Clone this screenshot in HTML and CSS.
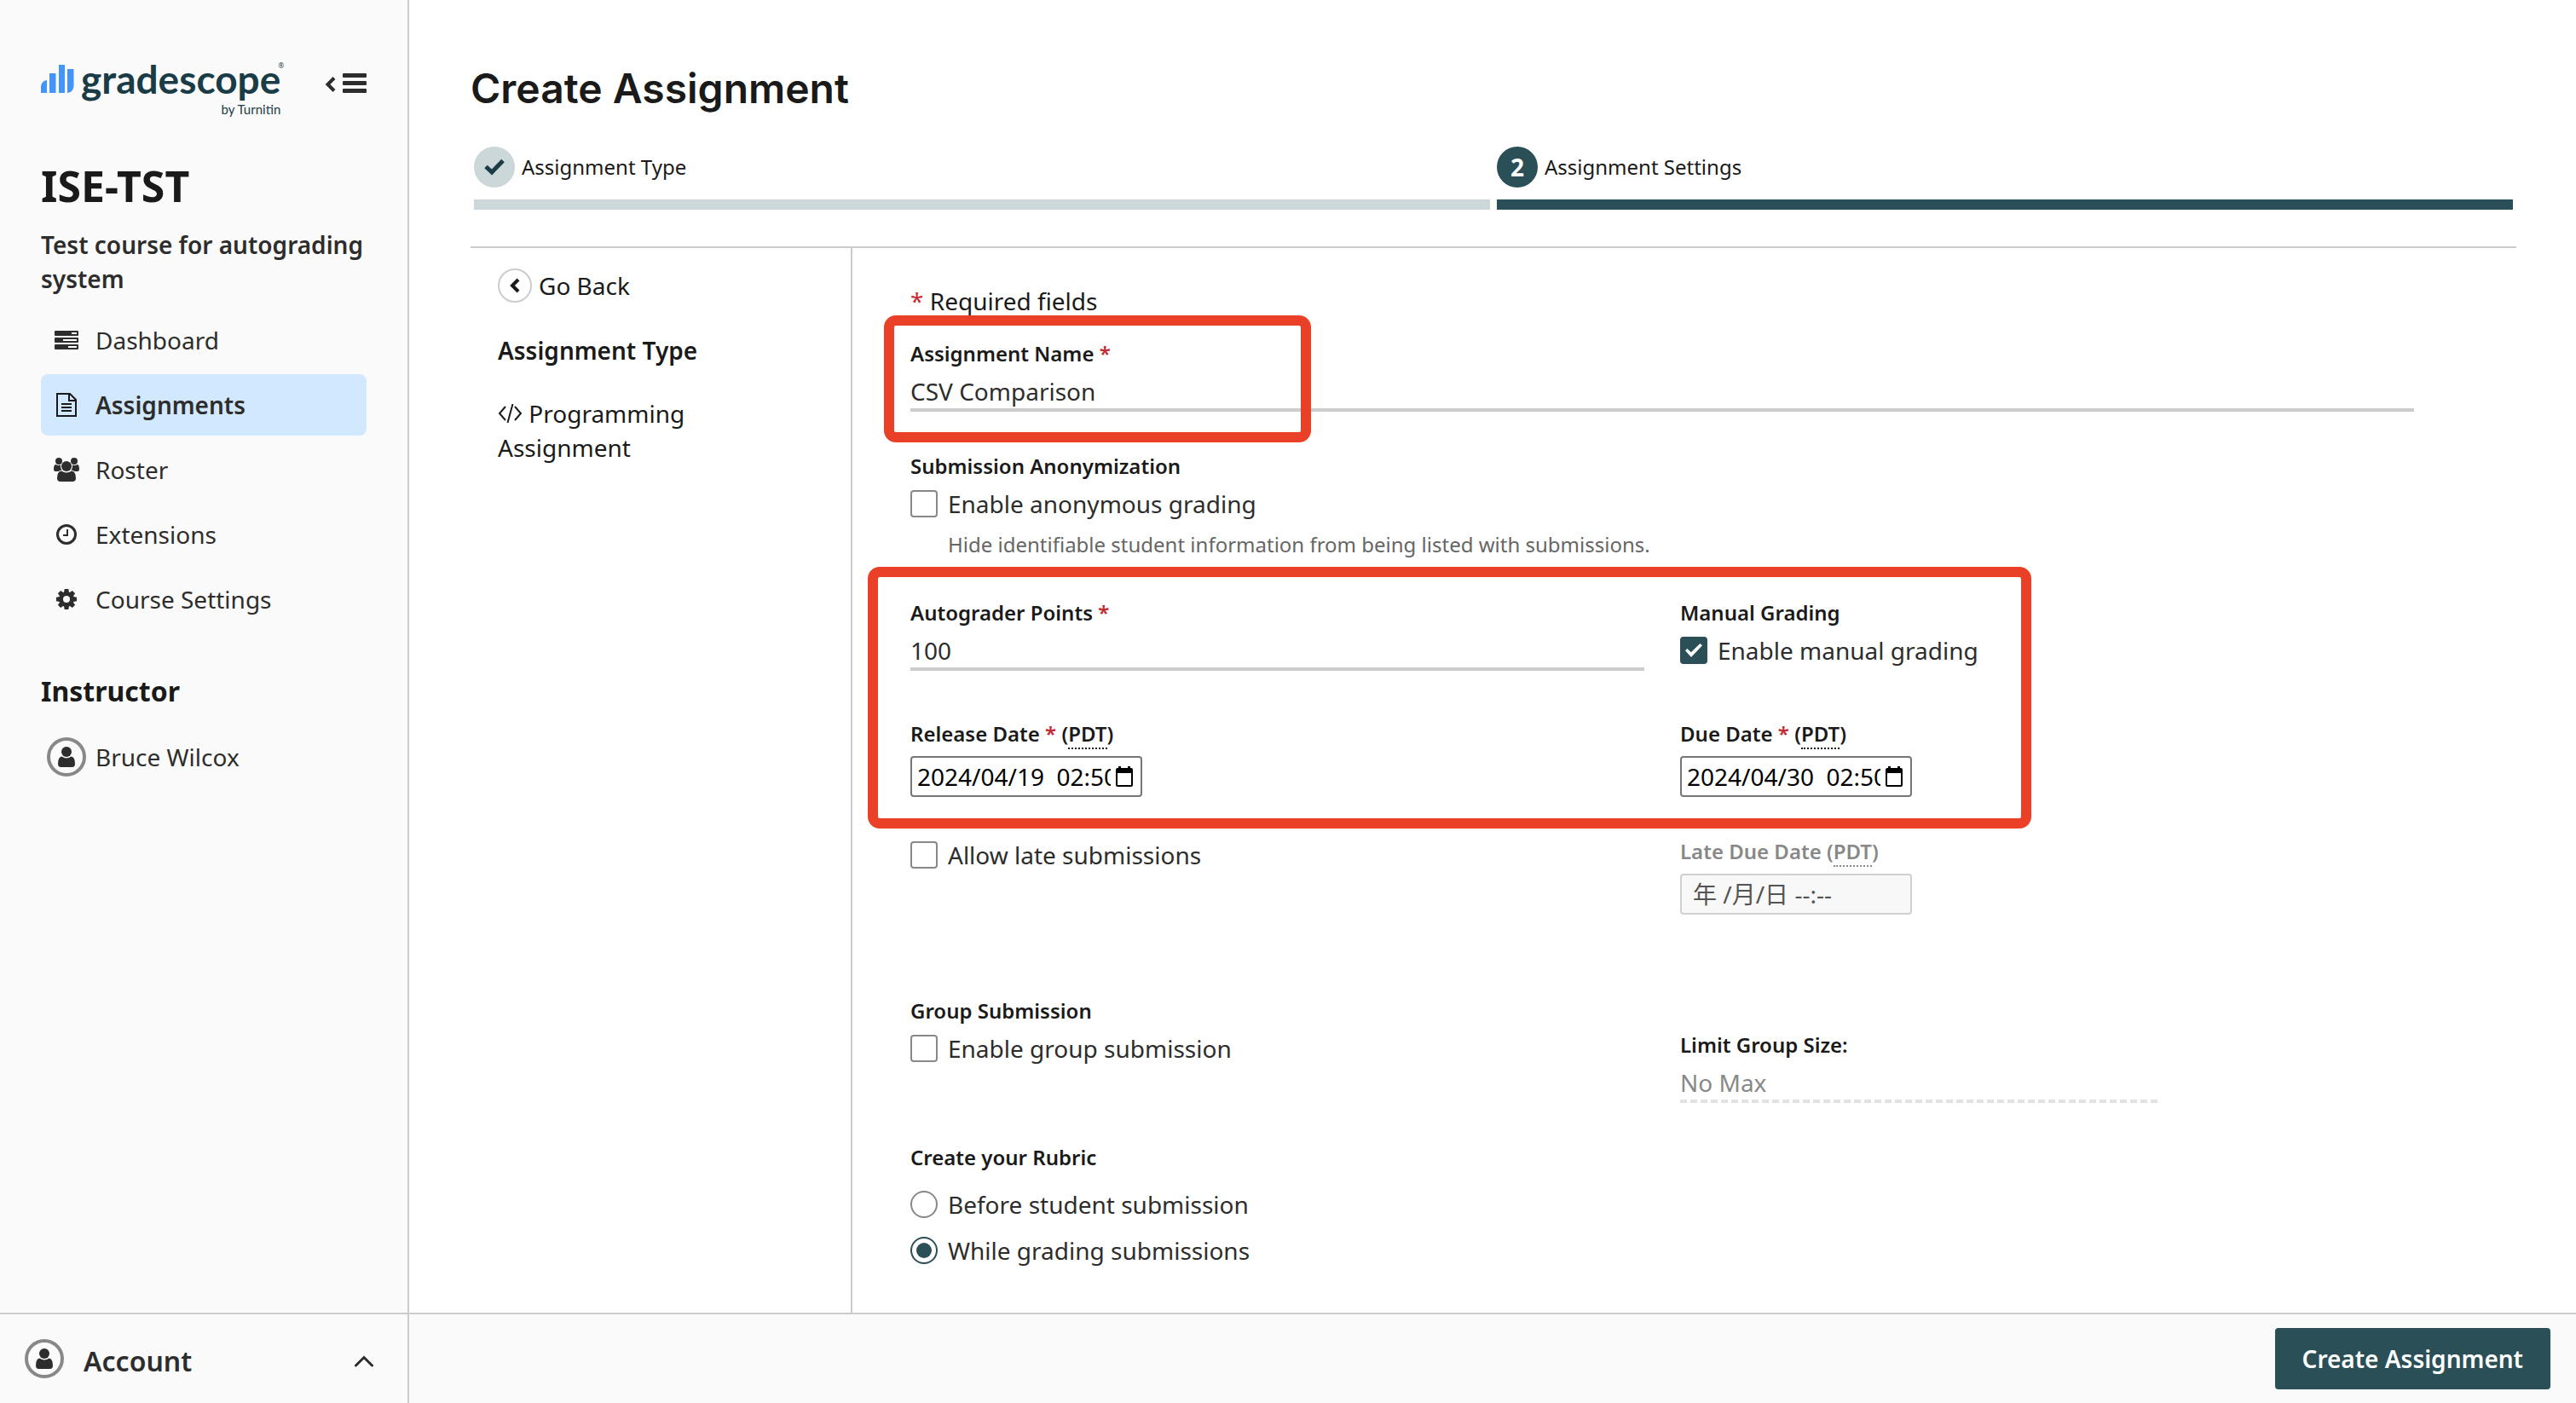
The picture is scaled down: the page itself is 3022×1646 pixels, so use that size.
FILE: index.html
```html
<!DOCTYPE html>
<html lang="en">
<head>
<meta charset="utf-8">
<title>Create Assignment | Gradescope</title>
<link rel="stylesheet" href="styles.css">
</head>
<body>
<div class="app">
  <aside class="sidebar">
    <div class="sidebar-top">
      <header class="brand-row">
        <a class="brand" href="#">
          <svg class="brand-bars" width="39" height="35" viewBox="0 0 39 35" aria-hidden="true">
            <g fill="#4394fb"><path d="M0 34V26Q1 20 7 19V34Z"/><path d="M10 11H17.500V34H10Z"/><path d="M21 1H28V34H21Z"/><path d="M31 6H38.500V26Q38 33 31 34Z"/></g>
          </svg>
          <span class="brand-text"><span class="brand-name">gradescope</span><span class="brand-by">by Turnitin</span></span>
          <sup class="brand-reg">®</sup>
        </a>
        <button class="icon-button" type="button" aria-label="Collapse sidebar">
          <svg width="49" height="24" viewBox="0 0 49 24"><path d="M11 5.500L3.500 13L11 20.500" fill="none" stroke="#2d2d2d" stroke-width="4"/><g fill="#2d2d2d"><rect x="21" width="28" height="5" rx="1"/><rect x="21" y="9" width="28" height="5" rx="1"/><rect x="21" y="18" width="28" height="5" rx="1"/></g></svg>
        </button>
      </header>
      <h1 class="course">ISE-TST</h1>
      <p class="course-name">Test course for autograding system</p>
      <nav class="nav">
        <a class="nav-item" href="#"><span class="nav-icon"><svg width="28" height="22" viewBox="0 0 28 22"><rect width="28" height="6" rx="1" fill="#2d2d2d"/><rect y="8" width="28" height="6" rx="1" fill="#2d2d2d"/><rect y="16" width="28" height="6" rx="1" fill="#2d2d2d"/><g fill="#fff"><rect x="20" y="2" width="6" height="2"/><rect x="10" y="10" width="16" height="2"/><rect x="16" y="18" width="10" height="2"/></g></svg></span>Dashboard</a>
        <a class="nav-item nav-item-active" href="#" aria-current="page"><span class="nav-icon"><svg width="24" height="28" viewBox="0 0 24 28" fill="none" stroke="#1a1a1a" stroke-width="2"><path d="M2 1H16L23 8V27H1V1ZM15 1V9H23M6 13H18M6 17H18M6 21H18"/></svg></span>Assignments</a>
        <a class="nav-item" href="#"><span class="nav-icon"><svg width="30" height="28" viewBox="0 0 30 28" fill="#2d2d2d"><circle cx="6" cy="4" r="4"/><circle cx="24" cy="4" r="4"/><path d="M2.500 8Q5 9.500 8 8.500Q7.500 12 9.500 14.500Q7 14.500 5.500 16H2Q0 16 0 13.500Q0 8 2.500 8ZM27.500 8Q25 9.500 22 8.500Q22.500 12 20.500 14.500Q23 14.500 24.500 16H28Q30 16 30 13.500Q30 8 27.500 8Z"/><circle cx="15" cy="10" r="6"/><path d="M9 15.500Q15 19.500 21 15.500Q26 16 26 24Q26 28 22 28H8Q4 28 4 24Q4 16 9 15.500Z"/></svg></span>Roster</a>
        <a class="nav-item" href="#"><span class="nav-icon"><svg width="24" height="24" viewBox="0 0 24 24" fill="none" stroke="#2d2d2d"><circle cx="12" cy="12" r="10.500" stroke-width="3"/><path d="M13 6V13H8" stroke-width="2"/></svg></span>Extensions</a>
        <a class="nav-item" href="#"><span class="nav-icon"><svg width="24" height="24" viewBox="-12 -12 24 24"><circle r="6.500" fill="none" stroke="#2d2d2d" stroke-width="5"/><g fill="#2d2d2d"><path id="tooth" d="M-3 -8L-2.300 -12H2.300L3 -8Z"/><use href="#tooth" transform="rotate(45)"/><use href="#tooth" transform="rotate(90)"/><use href="#tooth" transform="rotate(135)"/><use href="#tooth" transform="rotate(180)"/><use href="#tooth" transform="rotate(225)"/><use href="#tooth" transform="rotate(270)"/><use href="#tooth" transform="rotate(315)"/></g></svg></span>Course Settings</a>
      </nav>
      <h2 class="role">Instructor</h2>
      <div class="person"><span class="avatar"><svg width="20" height="24" viewBox="0 0 20 24" fill="#2d2d2d"><circle cx="10" cy="6" r="6"/><path d="M4.500 11.500Q10 15.500 15.500 11.500Q20 12 20 20Q20 24 16.500 24H3.500Q0 24 0 20Q0 12 4.500 11.500Z"/></svg></span>Bruce Wilcox</div>
    </div>
    <button class="account" type="button">
      <span class="avatar"><svg width="20" height="24" viewBox="0 0 20 24" fill="#2d2d2d"><circle cx="10" cy="6" r="6"/><path d="M4.500 11.500Q10 15.500 15.500 11.500Q20 12 20 20Q20 24 16.500 24H3.500Q0 24 0 20Q0 12 4.500 11.500Z"/></svg></span>
      <span class="account-text">Account
        <svg width="22" height="14" viewBox="0 0 22 14"><path d="M1.500 12L11 2.500L20.500 12" fill="none" stroke="#2d2d2d" stroke-width="3" stroke-linecap="round"/></svg>
      </span>
    </button>
  </aside>

  <div class="page">
    <main class="content">
      <h1 class="page-title">Create Assignment</h1>
      <ol class="steps">
        <li class="step step-done"><div class="step-head"><span class="step-dot"><svg width="26" height="20" viewBox="0 0 26 20"><path d="M3 9.500L10 16L23 2.500" fill="none" stroke="#1a3c46" stroke-width="5"/></svg></span>Assignment Type</div></li>
        <li class="step step-current"><div class="step-head"><span class="step-dot">2</span>Assignment Settings</div></li>
      </ol>
      <div class="columns">
        <section class="summary">
          <button class="back" type="button"><span class="back-dot"><svg width="12" height="18" viewBox="0 0 12 18"><path d="M10 2L3 9L10 16" fill="none" stroke="#1a1a1a" stroke-width="4"/></svg></span>Go Back</button>
          <h2 class="summary-title">Assignment Type</h2>
          <p class="summary-type"><svg class="code-icon" width="29" height="22" viewBox="0 0 29 22" fill="none" stroke="#1a1a1a" stroke-width="2"><path d="M9 3L2 11L9 19M20 3L27 11L20 19M17.500 0L11.500 22"/></svg> Programming Assignment</p>
        </section>
        <form class="form">
          <p class="required-note"><span class="star">*</span> Required fields</p>

          <div class="field marked">
            <label class="label" for="name">Assignment Name <span class="star">*</span></label>
            <input class="text-input" id="name" type="text" value="CSV Comparison">
            <span class="marker marker-name"></span>
          </div>

          <div class="field" role="group" aria-labelledby="anon-label">
            <span class="label" id="anon-label">Submission Anonymization</span>
            <label class="choice"><input class="tick" type="checkbox">Enable anonymous grading</label>
            <p class="hint">Hide identifiable student information from being listed with submissions.</p>
          </div>

          <div class="marked grading">
            <div class="pair">
              <div class="field">
                <label class="label" for="points">Autograder Points <span class="star">*</span></label>
                <input class="text-input" id="points" type="text" value="100">
              </div>
              <div class="field" role="group" aria-labelledby="manual-label">
                <span class="label" id="manual-label">Manual Grading</span>
                <label class="choice"><input class="tick" type="checkbox" checked>Enable manual grading</label>
              </div>
            </div>
            <div class="pair">
              <div class="field field-date">
                <label class="label" for="release">Release Date <span class="star">*</span> (<abbr>PDT</abbr>)</label>
                <div class="date-box">
                  <input class="date-input" id="release" type="text" value="2024/04/19&nbsp; 02:50">
                  <button class="date-button" type="button" aria-label="Pick release date"><svg width="20" height="24" viewBox="0 0 20 24"><path d="M3 0H6V2H14V0H17V2H18Q20 2 20 4V22Q20 24 18 24H2Q0 24 0 22V4Q0 2 2 2H3ZM2 8V22H18V8Z"/></svg></button>
                </div>
              </div>
              <div class="field field-date">
                <label class="label" for="due">Due Date <span class="star">*</span> (<abbr>PDT</abbr>)</label>
                <div class="date-box">
                  <input class="date-input" id="due" type="text" value="2024/04/30&nbsp; 02:50">
                  <button class="date-button" type="button" aria-label="Pick due date"><svg width="20" height="24" viewBox="0 0 20 24"><path d="M3 0H6V2H14V0H17V2H18Q20 2 20 4V22Q20 24 18 24H2Q0 24 0 22V4Q0 2 2 2H3ZM2 8V22H18V8Z"/></svg></button>
                </div>
              </div>
            </div>
            <span class="marker marker-grading"></span>
          </div>

          <div class="pair">
            <div class="field">
              <label class="choice"><input class="tick" type="checkbox">Allow late submissions</label>
            </div>
            <div class="field field-date field-off">
              <label class="label" for="late">Late Due Date (<abbr>PDT</abbr>)</label>
              <div class="date-box">
                <input class="date-input" id="late" type="text" value="年 /月/日 --:--" disabled>
              </div>
            </div>
          </div>

          <div class="pair pair-group">
            <div class="field" role="group" aria-labelledby="group-label">
              <span class="label" id="group-label">Group Submission</span>
              <label class="choice"><input class="tick" type="checkbox">Enable group submission</label>
            </div>
            <div class="field field-limit">
              <label class="label" for="limit">Limit Group Size:</label>
              <input class="text-input text-input-dashed" id="limit" type="text" placeholder="No Max" disabled>
            </div>
          </div>

          <div class="field" role="radiogroup" aria-labelledby="rubric-label">
            <span class="label" id="rubric-label">Create your Rubric</span>
            <div class="radios">
              <label class="choice"><input class="radio" type="radio" name="rubric">Before student submission</label>
              <label class="choice"><input class="radio" type="radio" name="rubric" checked>While grading submissions</label>
            </div>
          </div>
        </form>
      </div>
    </main>
    <footer class="actions"><button class="submit" type="button">Create Assignment</button></footer>
  </div>
</div>
</body>
</html>
```

FILE: styles.css
```css
* { box-sizing: border-box; }

body {
  margin: 0;
  background: #fff;
  color: #1a1a1a;
  font: 28px/40px "Noto Sans", "Noto Sans CJK SC", sans-serif;
}

h1, h2, p, ol { margin: 0; padding: 0; }
h1, h2 { font-weight: 600; }
ol { list-style: none; }
svg { display: block; }
a { color: inherit; text-decoration: none; }
button, input { font: inherit; color: inherit; margin: 0; padding: 0; border: 0; background: none; }

.app {
  display: grid;
  grid-template-columns: 480px minmax(0, 1fr);
  min-height: 100vh;
}

/* Sidebar */
.sidebar {
  display: flex;
  flex-direction: column;
  justify-content: space-between;
  background: #fafafa;
  border-right: 2px solid #ccc;
  color: #2d2d2d;
}
.sidebar-top { padding: 70px 48px 0; }

.brand-row { display: flex; justify-content: space-between; height: 72px; }
.brand { position: relative; display: flex; gap: 8px; color: #1a3c46; }
.brand-bars { margin-top: 5px; }
.brand-text { display: flex; flex-direction: column; align-items: flex-end; }
.brand-name { font: 700 46px/46px Lato, sans-serif; }
.brand-by { font: 400 15px/24px Lato, sans-serif; }
.brand-reg { position: absolute; top: 3px; right: -4px; font-size: 8px; line-height: 8px; }
.icon-button { align-self: flex-start; margin-top: 16px; }

.course { margin-top: 46px; font-size: 50px; font-weight: 700; line-height: 60px; color: #1a1a1a; }
.course-name { margin-top: 19px; font-weight: 600; }

.nav { display: flex; flex-direction: column; gap: 4px; margin-top: 16px; }
.nav-item {
  display: flex;
  align-items: center;
  height: 72px;
  padding-left: 14px;
  gap: 18px;
  border-radius: 8px;
}
.nav-item-active { background: #d2e8fe; font-weight: 600; }
.nav-icon { display: flex; justify-content: center; width: 32px; }

.role { margin-top: 50px; font-size: 32px; font-weight: 700; line-height: 44px; color: #1a1a1a; }
.person { display: flex; align-items: center; gap: 11px; margin-top: 32px; padding-left: 7px; }
.avatar {
  display: flex;
  align-items: center;
  justify-content: center;
  flex: none;
  width: 46px;
  height: 46px;
  border: 4px solid #888;
  border-radius: 50%;
}

.account {
  display: flex;
  align-items: flex-start;
  gap: 23px;
  height: 106px;
  padding: 29px 40px 0 29px;
  border-top: 2px solid #ccc;
  text-align: left;
}
.account-text {
  flex: 1;
  display: flex;
  align-items: center;
  justify-content: space-between;
  font-size: 32px;
  font-weight: 600;
  line-height: 52px;
}

/* Page */
.page { display: flex; flex-direction: column; }
.content { flex: 1; display: flex; flex-direction: column; padding: 72px 70px 0 72px; }
.page-title { font: 600 48px/64px Inter, sans-serif; }

.steps { display: flex; gap: 8px; margin: 36px 4px 43px; font-size: 24px; }
.step { flex: 1; border-bottom: 12px solid; padding-bottom: 14px; }
.step-done { border-color: #ccd7d9; }
.step-current { border-color: #2a4f57; }
.step-head { display: flex; align-items: center; gap: 8px; }
.step-dot {
  display: flex;
  align-items: center;
  justify-content: center;
  width: 48px;
  height: 48px;
  border-radius: 50%;
  font-size: 28px;
  font-weight: 700;
}
.step-done .step-dot { background: #ccd7d9; }
.step-current .step-dot { background: #2a4f57; color: #fff; }

.columns {
  flex: 1;
  display: grid;
  grid-template-columns: 448px minmax(0, 1fr);
  border-top: 2px solid #ccc;
}
.summary { padding: 24px 40px 0 32px; border-right: 2px solid #ccc; }
.back { display: flex; align-items: center; gap: 8px; }
.back-dot {
  display: flex;
  align-items: center;
  justify-content: center;
  width: 40px;
  height: 40px;
  border: 2px solid #ccc;
  border-radius: 50%;
}
.summary-title { margin-top: 36px; font-size: 28px; line-height: 40px; }
.summary-type { margin-top: 34px; }
.code-icon { display: inline; }

/* Form */
.form { display: flex; flex-direction: column; gap: 48px; padding: 42px 120px 48px 68px; }
.required-note { margin-bottom: -22px; }
.star { color: #c42a34; }
.field { display: flex; flex-direction: column; align-items: flex-start; gap: 8px; }
.field-date { gap: 10px; }
.pair { display: grid; grid-template-columns: 1fr 1fr; gap: 42px; }
.pair-group { margin-top: 49px; }
.grading { display: flex; flex-direction: column; gap: 58px; }
.label { font-size: 24px; font-weight: 600; line-height: 32px; }
abbr { border-bottom: 2px dotted; text-decoration: none; }

.text-input {
  width: 100%;
  height: 44px;
  border-bottom: 4px solid #ccc;
  color: #2d2d2d;
}
.text-input-dashed { width: 560px; border-bottom: 4px dashed #e2e2e2; }
.text-input::placeholder { color: #888; opacity: 1; }
.field-limit { padding-top: 40px; }

.choice { display: flex; align-items: center; gap: 12px; color: #2d2d2d; }
.hint { padding-left: 44px; margin-top: 4px; color: #666; font-size: 24px; line-height: 32px; }
.tick, .radio {
  appearance: none;
  display: flex;
  align-items: center;
  justify-content: center;
  width: 32px;
  height: 32px;
  border: 2px solid #888;
  border-radius: 4px;
  background: #fff;
}
.tick:checked { border-color: #2a4f57; background: #2a4f57; }
.tick:checked::before {
  content: "";
  width: 20px;
  height: 16px;
  background: #fff;
  clip-path: polygon(0 52%, 12% 38%, 34% 64%, 87% 0, 100% 14%, 35% 100%);
}
.radio { border-radius: 50%; }
.radio:checked { border-color: #2a4f57; }
.radio:checked::before { content: ""; width: 18px; height: 18px; border-radius: 50%; background: #2a4f57; }
.radios { display: flex; flex-direction: column; gap: 14px; margin-top: 11px; }

.date-box {
  display: flex;
  align-items: center;
  width: 272px;
  height: 48px;
  padding: 0 9px 0 6px;
  border: 2px solid #767676;
  border-radius: 4px;
  color: #000;
}
.date-input { flex: 1; min-width: 0; height: 40px; }
.date-button { padding-left: 6px; }
.field-off { color: #888; }
.field-off .date-box { padding-left: 13px; border-color: #d0d0d0; background: #f8f8f8; color: #545454; }

/* Highlight frames drawn over the form */
.marked { position: relative; }
.marker { position: absolute; border: 12px solid #ea4027; border-radius: 14px; pointer-events: none; }
.marker-name { top: -29px; left: -31px; width: 501px; height: 149px; }
.marker-grading { top: -38px; left: -50px; width: 1365px; height: 307px; }

.actions {
  display: flex;
  justify-content: flex-end;
  padding: 16px 30px;
  border-top: 2px solid #ccc;
  background: #fafafa;
}
.submit { height: 72px; padding: 0 32px; border-radius: 4px; background: #2a4f57; color: #fff; font-weight: 600; }
```
